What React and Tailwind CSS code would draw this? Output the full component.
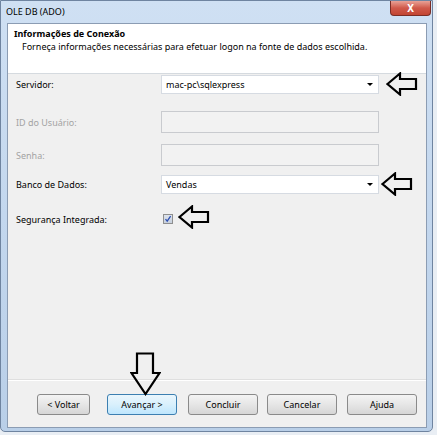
import React from 'react'

const FONT = { fontFamily: '"Noto Sans", "Open Sans", sans-serif' }

function LeftArrow({ className }) {
  return (
    <svg className={className} width="32" height="24" viewBox="0 0 32 24">
      <polygon
        points="1.5,12 14,1.5 14,7 30,7 30,17 14,17 14,22.5"
        fill="none"
        stroke="#000"
        strokeWidth="2.2"
        strokeLinejoin="miter"
      />
    </svg>
  )
}

function DownArrow({ className }) {
  return (
    <svg className={className} width="31" height="44" viewBox="0 0 31 44">
      <polygon
        points="7,1.5 23,1.5 23,21 29.5,21 15.5,42 1.5,21 7,21"
        fill="none"
        stroke="#000"
        strokeWidth="2.2"
      />
    </svg>
  )
}

function Combo({ value }) {
  return (
    <div className="w-[218px] h-[19px] bg-white border border-[#d6dbe2] flex items-center justify-between pl-[4px] pr-[5px]">
      <span className="text-[9px] text-black leading-none">{value}</span>
      <span className="w-0 h-0 border-l-[3px] border-r-[3px] border-t-[3px] border-l-transparent border-r-transparent border-t-black" />
    </div>
  )
}

function Disabled() {
  return <div className="w-[218px] h-[22px] bg-[#f2f2f2] border border-[#c9cbcf]" />
}

function Row({ label, disabled, children, className }) {
  return (
    <div className={`flex items-center ${className}`}>
      <span className={`w-[145px] text-[9px] leading-none ${disabled ? 'text-[#a3a3a3]' : 'text-black'}`}>{label}</span>
      {children}
    </div>
  )
}

function Button({ children, primary, className }) {
  return (
    <button
      className={`h-[21px] rounded-[3px] border text-[9px] text-black leading-none ${
        primary
          ? 'border-[#3c7fb1] bg-gradient-to-b from-[#eaf6fd] via-[#d9f0fc] to-[#bee6fd]'
          : 'border-[#8a8a8a] bg-gradient-to-b from-[#f4f4f4] via-[#e6e6e6] to-[#d6d6d6]'
      } ${className}`}
    >
      {children}
    </button>
  )
}

export default function App() {
  return (
    <div className="relative w-[437px] h-[435px] bg-[#e9eef4] overflow-hidden" style={FONT}>
      {/* window frame */}
      <div className="w-[433px] h-[432px] bg-gradient-to-b from-[#cfe0f3] via-[#c3d7ee] to-[#b9cfe8] border border-[#6f84a0] rounded-b-[5px] flex flex-col">
        {/* title bar */}
        <div className="h-[22px] flex items-center justify-between pl-[5px]">
          <span className="text-[9px] text-black">OLE DB (ADO)</span>
          <div className="self-start w-[41px] h-[15px] mr-[1px] rounded-b-[4px] border border-t-0 border-[#7a2d25] bg-gradient-to-b from-[#e8a196] via-[#d0594a] to-[#c24532] flex items-center justify-center">
            <span className="text-white text-[10px] font-bold leading-none">X</span>
          </div>
        </div>

        {/* client area */}
        <div className="ml-[6px] mr-[5px] h-[405px] border border-[#8b9cb3] bg-[#f0f0f0] flex flex-col">
          {/* header */}
          <div className="h-[50px] bg-white pl-[6px] pt-[3px] border-b border-[#d5dadf]">
            <div className="text-[9px] font-bold text-black leading-[13px]">Informações de Conexão</div>
            <div className="text-[9px] text-black leading-[13px] pl-[8px]">
              Forneça informações necessárias para efetuar logon na fonte de dados escolhida.
            </div>
          </div>

          {/* form */}
          <div className="h-[306px] pl-[8px] pt-[1px] flex flex-col border-b border-[#dfdfdf]">
            <Row label="Servidor:">
              <Combo value="mac-pc\sqlexpress" />
            </Row>
            <Row label="ID do Usuário:" disabled className="mt-[17px]">
              <Disabled />
            </Row>
            <Row label="Senha:" disabled className="mt-[11px]">
              <Disabled />
            </Row>
            <Row label="Banco de Dados:" className="mt-[9px]">
              <Combo value="Vendas" />
            </Row>
            <Row label="Segurança Integrada:" className="mt-[20px]">
              <div className="ml-[2px] w-[10px] h-[10px] border border-[#8f8f8f] bg-gradient-to-b from-[#dde3ec] to-[#c7d0dd] flex items-center justify-center">
                <svg width="8" height="8" viewBox="0 0 8 8">
                  <path d="M1.5 4.2 L3.2 6.2 L6.6 1.2" fill="none" stroke="#2d4fb3" strokeWidth="1.3" />
                </svg>
              </div>
            </Row>
          </div>

          {/* footer */}
          <div className="flex-1 border-t border-white flex items-start pt-[13px] pl-[29px]">
            <Button className="w-[53px]">&lt; Voltar</Button>
            <Button primary className="w-[70px] ml-[17px]">Avançar &gt;</Button>
            <Button className="w-[70px] ml-[11px]">Concluir</Button>
            <Button className="w-[70px] ml-[9px]">Cancelar</Button>
            <Button className="w-[70px] ml-[10px]">Ajuda</Button>
          </div>
        </div>
      </div>

      {/* annotation arrows */}
      <LeftArrow className="absolute left-[386px] top-[72px]" />
      <LeftArrow className="absolute left-[381px] top-[172px]" />
      <LeftArrow className="absolute left-[178px] top-[205px]" />
      <DownArrow className="absolute left-[130px] top-[352px]" />
    </div>
  )
}
